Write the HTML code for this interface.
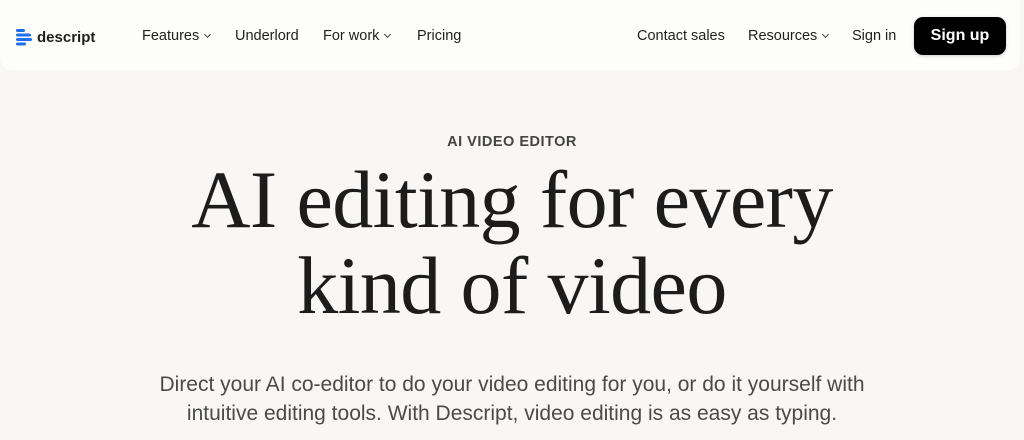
<!DOCTYPE html>
<html><head><meta charset="utf-8"><style>
*{margin:0;padding:0;box-sizing:border-box}
body{width:1024px;height:440px;overflow:hidden;background:#f8f7f5;font-family:"Liberation Sans",sans-serif;color:#1a1a1a;position:relative}
.nav{position:absolute;left:0;top:0;width:1020px;height:70px;background:#fdfdfc;border-radius:0 0 12px 12px}
.nav a{position:absolute;top:28px;font-size:14.5px;color:#1f1f1f;text-decoration:none;white-space:nowrap}
.chev{display:inline-block;width:5px;height:5px;border-right:1.2px solid #444;border-bottom:1.2px solid #444;transform:rotate(45deg);margin-left:6px;position:relative;top:-3px}
.logo{position:absolute;left:16px;top:29px}
.btn{position:absolute;left:914px;top:17px;width:92px;height:38px;background:#000;color:#fff;border-radius:9px;font-weight:bold;font-size:16px;text-align:center;line-height:38px;box-shadow:0 1px 3px rgba(0,0,0,.2)}
.eyebrow{position:absolute;top:134px;left:0;width:1024px;text-align:center;font-size:14.5px;font-weight:bold;color:#444;letter-spacing:.5px}
h1{position:absolute;top:157px;left:0;width:1024px;text-align:center;font-family:"Liberation Serif",serif;font-weight:normal;font-size:82px;line-height:86px;letter-spacing:-0.6px;color:#1c1c1c}
p{position:absolute;top:370px;left:0;width:1024px;text-align:center;font-size:21px;line-height:29px;color:#4a4a4a}
</style></head><body>
<div class="nav">
<svg class="logo" width="18" height="17" viewBox="0 0 18 17"><g fill="#1f6ef0"><rect x="0" y="0" width="9" height="3" rx="1.5"/><rect x="0" y="4.5" width="15" height="3" rx="1.5"/><rect x="0" y="9" width="16" height="3" rx="1.5"/><rect x="0" y="13.5" width="10" height="3" rx="1.5"/></g></svg>
<a style="left:37px;font-weight:bold;font-size:15px;top:29px">descript</a>
<a style="left:142px">Features<span class="chev"></span></a>
<a style="left:235px">Underlord</a>
<a style="left:323px">For work<span class="chev"></span></a>
<a style="left:417px">Pricing</a>
<a style="left:637px">Contact sales</a>
<a style="left:748px">Resources<span class="chev"></span></a>
<a style="left:852px">Sign in</a>
<div class="btn">Sign up</div>
</div>
<div class="eyebrow">AI VIDEO EDITOR</div>
<h1>AI editing for every<br>kind of video</h1>
<p>Direct your AI co-editor to do your video editing for you, or do it yourself with<br>intuitive editing tools. With Descript, video editing is as easy as typing.</p>
</body></html>
